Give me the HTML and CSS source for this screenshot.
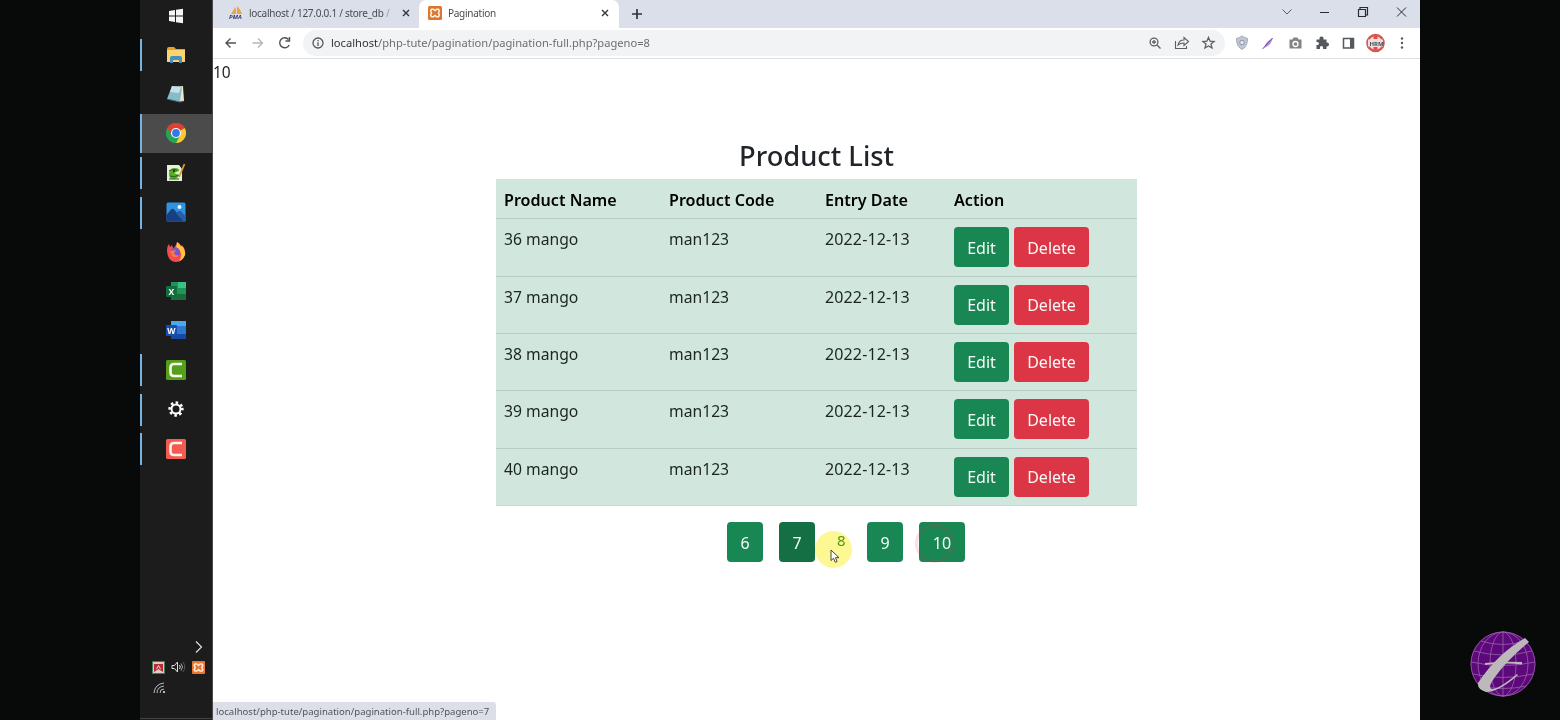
FILE: index.html
```html
<!DOCTYPE html>
<html lang="en">
<head>
<meta charset="utf-8">
<title>Pagination</title>
<link rel="stylesheet" href="styles.css">
</head>
<body>
<div class="screen">
  <aside class="taskbar">
    <div class="task start"><svg width="16" height="16" viewBox="0 0 16 16" fill="#f5f5f5"><path d="M1 3l6-1v5.500H1zM8 1.800L15 .8v6.700H8zM1 8.500h6V14l-6-1zM8 8.500h7v6.700l-7-1z"/></svg></div>
    <div class="task open"><svg width="20" height="20" viewBox="0 0 20 20"><path d="M1 4q0-2 2-2h5l2 2h9v13H1z" fill="#e6a12c"/><path d="M1 5h18v12H1z" fill="#fbd46f"/><path d="M4 18v-5q0-2 2-2h8q2 0 2 2v5h-3v-3H7v3z" fill="#4590bd"/></svg></div>
    <div class="task"><svg width="20" height="20" viewBox="0 0 20 20"><path d="M6 3l11-1 1 15-4 1z" fill="#eee7c8"/><path d="M6 2l10 1-2 15L1 15z" fill="#86bcc8"/><path d="M6 2l9 1-2 6-9-1z" fill="#c5e1e5"/><path d="M1 15l13 3 3-1" fill="none" stroke="#397480"/></svg></div>
    <div class="task open active"><svg width="20" height="20" viewBox="0 0 20 20"><path d="M10 10L1.400 5A10 10 0 0 1 18.700 5z" fill="#df4034"/><path d="M10 10V0L1.400 5A10 10 0 0 0 10 20z" fill="#27a454"/><path d="M10 10L18.700 5A10 10 0 0 1 10 20z" fill="#fbcb30"/><path d="M1.400 5A10 10 0 0 1 18.700 5H10a5 5 0 0 0-4.300 7.500z" fill="#df4034"/><path d="M1.400 5l4.300 7.500A5 5 0 0 0 14 13l-4 7A10 10 0 0 1 1.400 5z" fill="#27a454"/><circle cx="10" cy="10" r="5" fill="#fff"/><circle cx="10" cy="10" r="3.900" fill="#3478e5"/></svg></div>
    <div class="task open"><svg width="20" height="20" viewBox="0 0 20 20"><path d="M1 2h12l3 4v12H1z" fill="#e8f0dc"/><path d="M3 11q0-5 5-6 6 0 5 3l-5 2 5 2q-1 4-6 4-4 0-4-5z" fill="#58ad22"/><path d="M3 8q3-3 8-1M4 13q4 2 9-1M3 16h10" stroke="#22631a" fill="none"/><circle cx="8" cy="8" r="1.200" fill="#243f13"/><path d="M18.500 1L13 14" stroke="#d19c32" stroke-width="1.800"/></svg></div>
    <div class="task open"><svg width="20" height="20" viewBox="0 0 20 20"><rect x=".5" y=".5" width="19" height="19" rx="1.500" fill="#3192df"/><path d="M.5 13L5 7.500q1.500-1.500 3 0l11.500 12H.5z" fill="#183f82"/><path d="M10 11.500l2-2q1.500-1.500 3 0l4.500 4.500v5.500h-2z" fill="#265fa8"/><circle cx="13.500" cy="5" r="2" fill="#e7f7ff"/></svg></div>
    <div class="task"><svg width="20" height="20" viewBox="0 0 20 20"><path d="M1 9Q1 4 3 2l1 3 2-2 1 3q2 0 4-6 3 1 4 4l1-1q4 4 3 9-2 8-9 8-8 0-9-11z" fill="#f24b52"/><path d="M11 0q4 3 4 5l1-1q4 4 3 9-2 5-6 6 4-5 1-10-2-3-4-4 1-2 1-5z" fill="#ffc83e"/><circle cx="9.500" cy="10" r="4.500" fill="#7954cc"/><path d="M4 9l6-1-2 3q1 3 5 2-3 4-7 1z" fill="#f57a3d"/></svg></div>
    <div class="task"><svg width="20" height="20" viewBox="0 0 20 20"><path d="M5 1h15v18H5z" fill="#21945a"/><path d="M12 1h8v6h-8z" fill="#39c184"/><path d="M5 13h15v6H5z" fill="#176d3b"/><rect y="5" width="11" height="11" rx="1" fill="#126e3e"/><text class="appletter" x="2.500" y="13.700">X</text></svg></div>
    <div class="task"><svg width="20" height="20" viewBox="0 0 20 20"><path d="M5 1h15v18H5z" fill="#2e79ce"/><path d="M5 1h15v5H5z" fill="#48a9ef"/><path d="M5 14h15v5H5z" fill="#1549a3"/><rect y="5" width="11" height="11" rx="1" fill="#174fae"/><text class="appletter" x="1.300" y="13.700">W</text></svg></div>
    <div class="task open"><svg width="20" height="20" viewBox="0 0 20 20"><rect width="20" height="20" rx="1.500" fill="#55a018"/><path d="M16 4H8Q4.500 4 4.500 7.500v5Q4.500 16 8 16h8" fill="none" stroke="#f7faee" stroke-width="2.600"/></svg></div>
    <div class="task open"><svg width="18" height="18" viewBox="0 0 18 18"><g stroke="#fff" fill="none"><circle cx="9" cy="9" r="4.500" stroke-width="2"/><circle cx="9" cy="9" r="6.400" stroke-width="2.500" stroke-dasharray="2.500 2.527" transform="rotate(-10 9 9)"/></g></svg></div>
    <div class="task open"><svg width="20" height="20" viewBox="0 0 20 20"><rect width="20" height="20" rx="1.500" fill="#f45b50"/><path d="M16 4H8Q4.500 4 4.500 7.500v5Q4.500 16 8 16h8" fill="none" stroke="#fff0ec" stroke-width="2.600"/></svg></div>
    <div class="tray">
      <svg width="72" height="82" viewBox="0 0 72 82"><g fill="none" stroke="#ddd"><path d="M56 4.500l5.500 5.500-5.500 5.500" stroke-width="1.200"/><path d="M32 28.500h2.500l3-3.500v10l-3-3.500H32zM39.500 28q1.500 2 0 4"/><path d="M41 26.500q3 3.500 0 7" stroke="#aaa"/><path d="M43 25q3.500 5 0 10" stroke="#555"/><path d="M14 56q1-9 10-10M17 56q0-6 7-7M20 56q0-4 4-4" stroke="#bbb"/></g><rect x="12.500" y="24.500" width="12" height="12" fill="#ddcbc2" stroke="#38805b"/><path d="M14 35v-8h9v8l-4.500-3z" fill="#bf2837"/><path d="M16.500 32l2-3.500 2 3.500" stroke="#efd4cd" fill="none"/><rect x="52" y="24" width="13" height="13" rx="1" fill="#ed762e"/><path d="M55 27h2l1.500 1.500L60 27h2l.8 1.500-1 2 1 2-.8 1.500h-2l-1.500-1.500L57 34h-2l-.8-1.500 1-2-1-2z" fill="none" stroke="#ffe9d7" stroke-width="1.600" stroke-linejoin="round"/><circle cx="24" cy="55" r="1" fill="#eee"/></svg>
    </div>
  </aside>
  <main class="browser">
    <header class="tabs">
      <div class="tab idle"><svg width="16" height="14" viewBox="0 0 16 14"><path d="M2 8Q5 4 6 1q2 3 1 7zM8 8V0q4 4 5 8z" fill="#eda142"/><text class="pma" x="0" y="13">PMA</text></svg><span class="tabtitle first">localhost / 127.0.0.1 / store_db <i>/</i></span><svg class="close" width="10" height="10" viewBox="0 0 10 10"><path d="M2 2l6 6m0-6l-6 6"/></svg></div>
      <div class="tab current"><svg width="14" height="14" viewBox="0 0 14 14"><rect width="14" height="14" rx="1.500" fill="#dd752d"/><path d="M3.500 3.200h2L7 4.700l1.500-1.500h2l.9 1.800-1 2 1 2-.9 1.800h-2L7 9.300l-1.500 1.500h-2L2.600 9l1-2-1-2z" fill="none" stroke="#fff1e6" stroke-width="1.600" stroke-linejoin="round"/></svg><span class="tabtitle second">Pagination</span><svg class="close" width="10" height="10" viewBox="0 0 10 10"><path d="M2 2l6 6m0-6l-6 6"/></svg></div>
      <svg class="plus" width="12" height="12" viewBox="0 0 12 12"><path d="M6 1v10M1 6h10" stroke="#30343a" stroke-width="1.700"/></svg>
      <svg class="winctl" width="130" height="24" viewBox="0 0 130 24" fill="none" stroke="#282b31"><path d="M2.500 9.500l4.500 4.500 4.500-4.500" stroke="#5a5d63"/><path d="M40 12.500h9M117 7.500l9 9m0-9l-9 9"/><path d="M78.500 9.500h7v7h-7zM80 9V7.500h7.500V15H86" stroke-width="1.200"/></svg>
    </header>
    <div class="toolbar">
      <svg class="nav" width="86" height="26" viewBox="0 0 86 26" fill="none" stroke="#4d5156" stroke-width="1.400"><path d="M23 13H13m4.500-4.500L13 13l4.500 4.500"/><path d="M39.500 13h10M45 8.500l4.500 4.500-4.500 4.500" stroke="#b5b7ba"/><path d="M75.500 9.500A5 5 0 1 0 76.200 15M76.500 7v4h-4"/></svg>
      <div class="address"><svg width="12" height="12" viewBox="0 0 12 12" fill="none" stroke="#55585d" stroke-width="1.300"><circle cx="6" cy="6" r="5"/><path d="M6 5.200V9M6 3v1.200"/></svg><span class="url"><b>localhost</b>/php-tute/pagination/pagination-full.php?pageno=8</span>
      <svg class="addricons" width="72" height="20" viewBox="0 0 72 20" fill="none" stroke="#5c6065" stroke-width="1.300"><circle cx="8" cy="9" r="3.900"/><path d="M11 12l3.500 3.500M6 9h4M8 7v4"/><path d="M29.500 8v7.500h11V13M32 12q1-5 6-5V4.500l4.500 4L38 12.500V10q-4 0-6 2z" stroke-width="1.100"/><path d="M62.500 4.500l1.600 3.700 4 .3-3.100 2.600 1 3.900-3.500-2.100L59 15l1-3.900-3.100-2.600 4-.3z"/></svg></div>
      <svg class="ext" width="186" height="26" viewBox="0 0 186 26"><path d="M16 6q3 2 5.500 2.500 0 8-5.500 11-5.500-3-5.500-11Q13 8 16 6z" fill="#c3c7d3" stroke="#a2a8b6"/><circle cx="16" cy="12.500" r="2.300" fill="#e3e6ef" stroke="#8b93ab"/><path d="M38 18q1-6 9-10-2 7-7 9z" fill="#b590d8"/><path d="M36.500 19L46.500 8" stroke="#794caa"/><path d="M63.500 9.500h3l1-2h4l1 2h3v9h-12z" fill="#818385"/><circle cx="69.500" cy="14" r="2.500" fill="none" stroke="#fff" stroke-width="1.300"/><path d="M90.500 9.500h3q-.5-3 2-3t2 3h3v3q2.500-.5 2.500 2t-2.500 2v2.500H97q.5-3-1.500-3t-1.500 3h-3.500V15q2.500.5 2.500-1.500t-2.500-1.500z" fill="#55595e"/><path d="M117.500 8.500h10v9.500h-10z" fill="none" stroke="#55595e" stroke-width="1.500"/><path d="M124 8h4v10h-4z" fill="#55595e"/><circle cx="149.500" cy="13" r="8" fill="#f7dedd" stroke="#dc5550" stroke-width="2.600"/><path d="M142 9.500h15v7h-15z" fill="#e6dfe1"/><text class="hrm" x="143.500" y="15.500">HRM</text><path d="M147.500 6h4v3h-4zM147.500 17h4v3h-4z" fill="#d65350"/><g fill="#55595e"><circle cx="176" cy="8.500" r="1.200"/><circle cx="176" cy="13" r="1.200"/><circle cx="176" cy="17.500" r="1.200"/></g></svg>
    </div>
    <section class="page">
      <div class="count">10</div>
      <h1><span>Product List</span></h1>
      <table>
        <thead><tr><th class="c1">Product Name</th><th class="c2">Product Code</th><th class="c3">Entry Date</th><th class="c4">Action</th></tr></thead>
        <tbody>
          <tr><td>36 mango</td><td>man123</td><td class="date">2022-12-13</td><td><div class="actions"><a class="btn edit">Edit</a><a class="btn delete">Delete</a></div></td></tr>
          <tr><td>37 mango</td><td>man123</td><td class="date">2022-12-13</td><td><div class="actions"><a class="btn edit">Edit</a><a class="btn delete">Delete</a></div></td></tr>
          <tr><td>38 mango</td><td>man123</td><td class="date">2022-12-13</td><td><div class="actions"><a class="btn edit">Edit</a><a class="btn delete">Delete</a></div></td></tr>
          <tr><td>39 mango</td><td>man123</td><td class="date">2022-12-13</td><td><div class="actions"><a class="btn edit">Edit</a><a class="btn delete">Delete</a></div></td></tr>
          <tr><td>40 mango</td><td>man123</td><td class="date">2022-12-13</td><td><div class="actions"><a class="btn edit">Edit</a><a class="btn delete">Delete</a></div></td></tr>
        </tbody>
      </table>
      <nav class="pages"><a class="btn">6</a><a class="btn hover">7</a><span class="here">8</span><a class="btn">9</a><a class="btn ten">10</a></nav>
    </section>
    <div class="status"><span>localhost/php-tute/pagination/pagination-full.php?pageno=7</span></div>
  </main>
  <div class="ripple"></div>
  <div class="spot"></div>
  <svg class="cursor" width="10" height="15" viewBox="0 0 10 15"><path d="M1 1v10.500l2.500-2.200 1.800 4 1.800-.8-1.700-3.800H9z" fill="#fff" stroke="#333" stroke-width=".9"/></svg>
  <svg class="logo" width="68" height="68" viewBox="0 0 68 68"><circle cx="34" cy="34" r="32.500" fill="#5d087b"/><g fill="none" stroke="#9259a4" stroke-width=".9"><circle cx="34" cy="34" r="32"/><ellipse cx="34" cy="34" rx="25" ry="32"/><ellipse cx="34" cy="34" rx="13" ry="32"/><path d="M34 2v64M12 11q22 7 44 0M5 21q29 8 58 0M2 32q32 7 64 0M4 44q30 7 60 0M11 56q23 5 46 0"/></g><path d="M56 8l4 4Q39 29 26 47q-8 11-3 12 7 0 25-15l1 1Q30 62 17 62q-9-3-8-9Q28 24 56 8z" fill="#bcb8bc"/><path d="M16 33q18-2 37-1v2.500q-18-2-37 .5z" fill="#bcb8bc"/></svg>
</div>
</body>
</html>
```
FILE: styles.css
```css
* { box-sizing: border-box; }
body { margin: 0; background: #080a09; font-family: "Noto Sans", "Open Sans", sans-serif; }
svg { display: block; flex: none; }
.screen { position: relative; display: flex; width: 1560px; height: 720px; overflow: hidden; padding: 0 140px; background: #080a09; }
.taskbar { display: flex; flex-direction: column; width: 73px; height: 720px; background: #1c1c1c; border-right: 1px solid #494949; padding-bottom: 1px; }
.task { display: flex; align-items: center; justify-content: center; height: 39.4px; flex: none; position: relative; }
.start { height: 35px; }
.start svg { margin-bottom: 3px; }
.open::before { content: ""; position: absolute; left: 0; top: 4px; width: 2px; height: 32px; background: #78b4e2; }
.active { background: #4b4b4b; }
.active::before { top: 0; height: 39px; }
.appletter { font: bold 8.5px "Open Sans", sans-serif; fill: #fff; }
.tray { margin-top: auto; height: 82px; border-bottom: 1px solid #444247; }
.browser { display: flex; flex-direction: column; width: 1207px; background: #fff; position: relative; }
.tabs { display: flex; height: 28px; background: #dbdfe9; align-items: stretch; }
.tab { display: flex; align-items: center; padding-bottom: 2px; }
.idle { width: 206px; padding-left: 16px; }
.current { width: 200px; background: #fff; border-radius: 7px 7px 0 0; padding-left: 9px; }
.pma { font: italic bold 6px "Open Sans", sans-serif; fill: #343b70; }
.tabtitle { font-size: 10px; letter-spacing: -.27px; color: #484b51; white-space: nowrap; line-height: 14px; }
.tabtitle i { color: #9a9da5; font-style: normal; }
.first { margin-left: 4px; width: 152px; }
.second { margin-left: 6px; width: 152px; }
.close { stroke: #33363b; stroke-width: 1.4; }
.plus { margin: 8px 0 0 12px; }
.winctl { margin: 0 10px 0 auto; }
.toolbar { display: flex; height: 31px; border-bottom: 1px solid #dedfe1; padding-top: 2px; }
.nav { margin-left: 0; margin-right: 3px; }
.address { display: flex; align-items: center; width: 922px; height: 26px; background: #f1f3f4; border-radius: 13px; padding: 0 9px; margin-left: 1px; }
.url { margin-left: 7px; font-size: 11.15px; color: #6b6f74; line-height: 16px; white-space: nowrap; }
.url b { font-weight: 400; color: #303338; }
.addricons { margin-left: auto; margin-right: -2px; }
.ext { margin-left: 1px; }
.page { display: flex; flex-direction: column; width: 1207px; height: 661px; color: #212529; font-size: 16px; }
.count { height: 80px; line-height: 27px; font-size: 15.5px; }
h1 { margin: 0; height: 40.4px; line-height: 34px; font-size: 27.3px; font-weight: 500; text-align: center; }
table { margin-left: 283px; width: 641px; border-collapse: separate; border-spacing: 0; table-layout: fixed; background: #d1e7dd; color: #1c2521; }
th, td { padding: 8px; text-align: left; vertical-align: top; border-bottom: 1px solid #b8cec5; line-height: 25px; white-space: nowrap; }
th { height: 39.8px; padding-bottom: 4px; line-height: 26px; color: #000; font-weight: 600; font-size: 16.1px; }
td { height: 57.4px; font-size: 15.7px; }
.date { font-size: 16px; letter-spacing: .13px; }
tr:last-child td { border-bottom-color: #c6dcd2; }
.c1 { width: 165px; }
.c2 { width: 156px; }
.c3 { width: 129px; }
.actions { display: flex; gap: 5px; }
.btn { display: flex; align-items: center; justify-content: center; height: 40px; padding-top: 2px; border-radius: 4px; color: #f5fbf8; background: #198754; font-size: 16px; }
.edit { width: 55px; }
.delete { width: 75px; background: #dc3545; }
.pages { display: flex; gap: 16px; margin: 15.7px 0 0 514px; }
.pages .btn { width: 36px; height: 40.5px; padding-top: 1px; }
.pages .hover { background: #147044; }
.here { width: 20px; margin: 0 8px 0 -8px; padding-left: 14px; line-height: 37px; font-size: 15px; color: #559b22; }
.pages .ten { width: 46px; }
.status { position: absolute; left: 0; bottom: 0; width: 283px; height: 18px; border-radius: 0 3px 0 0; background: #dcdfe7; color: #50545c; font-size: 9.55px; line-height: 20px; padding-left: 3px; white-space: nowrap; }
.ripple { position: absolute; left: 915px; top: 524px; width: 39px; height: 39px; border: 3px solid rgba(225, 50, 60, .15); border-radius: 50%; }
.spot { position: absolute; left: 815px; top: 531px; width: 37px; height: 37px; border-radius: 50%; background: #fcf66b; opacity: .72; mix-blend-mode: multiply; }
.cursor { position: absolute; left: 830px; top: 549px; }
.logo { position: absolute; left: 1469px; top: 630px; }
.hrm { font: bold 6px "Open Sans", sans-serif; fill: #49484b; }
```
